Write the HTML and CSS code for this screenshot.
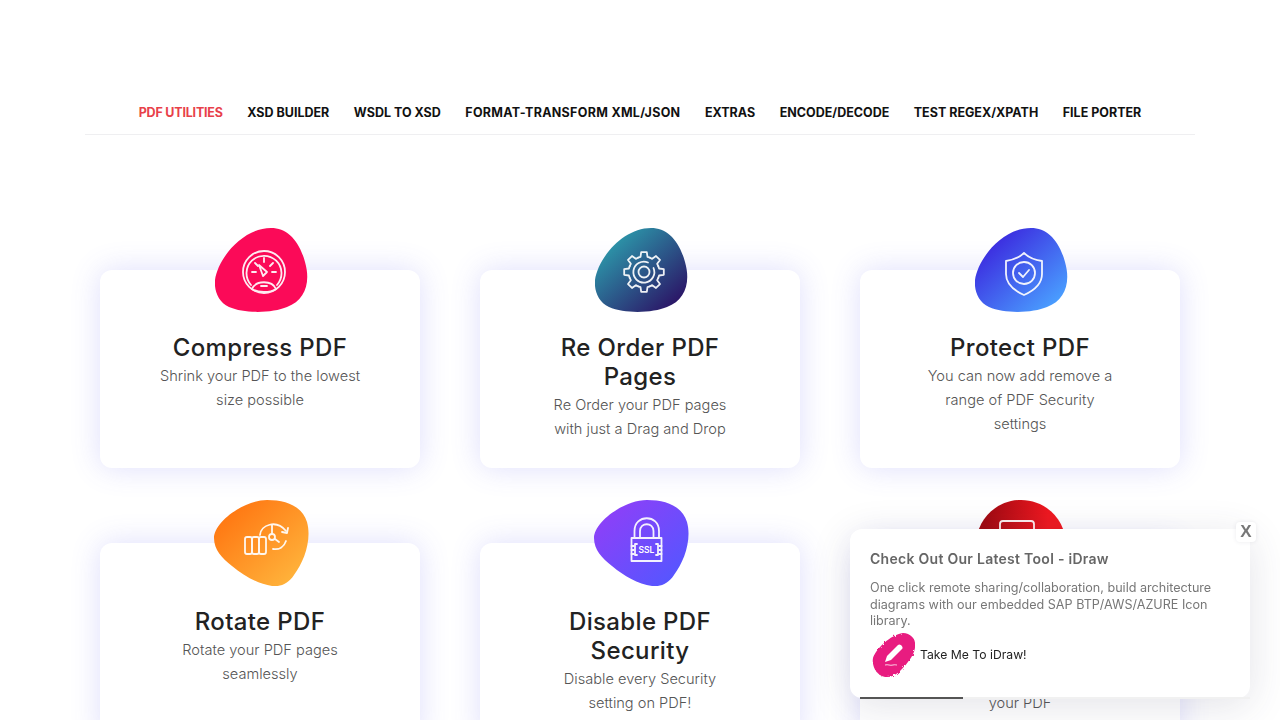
FILE: index.html
```html
<!DOCTYPE html>
<html lang="en">
<head>
  <meta charset="UTF-8" />
  <meta name="viewport" content="width=device-width, initial-scale=1.0"/>
  <title>PDF Utilities</title>
  <link rel="stylesheet" href="styles.css">
</head>
<body>

  <!-- Tabs -->
  <nav class="tabs">
    <a class="tab active" href="#">PDF UTILITIES</a>
    <a class="tab" href="#">XSD BUILDER</a>
    <a class="tab" href="#">WSDL TO XSD</a>
    <a class="tab tab-long" href="#">FORMAT-TRANSFORM XML/JSON</a>
    <a class="tab" href="#">EXTRAS</a>
    <a class="tab" href="#">ENCODE/DECODE</a>
    <a class="tab" href="#">TEST REGEX/XPATH</a>
    <a class="tab" href="#">FILE PORTER</a>
  </nav>

  <!-- Tool cards -->
  <main class="cards">

    <div class="card">
      <svg class="blob" viewBox="0 0 94 86">
        <path fill="#fb0a58" d="M56 0C72 0 84 12 90 34C96 55 90 72 72 79C58 85 30 86 14 79C3 74 -1 62 0 52C3 30 28 0 56 0Z"/>
        <g class="line">
          <circle cx="49" cy="44" r="21"/>
          <path d="M36 57A17.500 17.500 0 1 1 62 57"/>
          <path d="M49 30v4M37 44h4M57 44h4M40 35l3 3M58 35l-3 3"/>
          <path d="M44 37L52 44L48 48Z"/>
          <path d="M37 61C41 52 57 52 61 61C55 65 43 65 37 61Z"/>
          <path d="M46 58h6"/>
        </g>
      </svg>
      <h3>Compress PDF</h3>
      <p>Shrink your PDF to the lowest<br>size possible</p>
    </div>

    <div class="card">
      <svg class="blob" viewBox="0 0 94 86">
        <defs>
          <linearGradient id="teal" x1="0" y1="0" x2="1" y2="1">
            <stop offset="0.1" stop-color="#2ca3b0"/>
            <stop offset="0.9" stop-color="#2b1466"/>
          </linearGradient>
          <path id="tooth" d="M63.3 38.100L64.100 40.500L68.800 41.200L68.800 46.800L64.100 47.500L63.300 49.900"/>
        </defs>
        <path fill="url(#teal)" d="M56 0C72 0 84 12 90 34C96 55 90 72 72 79C58 85 30 86 14 79C3 74 -1 62 0 52C3 30 28 0 56 0Z"/>
        <g class="line">
          <use href="#tooth"/>
          <use href="#tooth" transform="rotate(45 49 44)"/>
          <use href="#tooth" transform="rotate(90 49 44)"/>
          <use href="#tooth" transform="rotate(135 49 44)"/>
          <use href="#tooth" transform="rotate(180 49 44)"/>
          <use href="#tooth" transform="rotate(225 49 44)"/>
          <use href="#tooth" transform="rotate(270 49 44)"/>
          <use href="#tooth" transform="rotate(315 49 44)"/>
          <path d="M53 34.500A10.500 10.500 0 1 0 58.500 40"/>
          <circle cx="49" cy="44" r="5.500"/>
        </g>
      </svg>
      <h3>Re Order PDF<br>Pages</h3>
      <p>Re Order your PDF pages<br>with just a Drag and Drop</p>
    </div>

    <div class="card">
      <svg class="blob" viewBox="0 0 94 86">
        <defs>
          <linearGradient id="blue" x1="0" y1="0" x2="1" y2="1">
            <stop offset="0.1" stop-color="#3a1fdc"/>
            <stop offset="0.9" stop-color="#4aa0ff"/>
          </linearGradient>
        </defs>
        <path fill="url(#blue)" d="M56 0C72 0 84 12 90 34C96 55 90 72 72 79C58 85 30 86 14 79C3 74 -1 62 0 52C3 30 28 0 56 0Z"/>
        <g class="line">
          <path d="M49 25C54 30 60 32 67 33V46C67 56 58 63 49 67C40 63 31 56 31 46V33C38 32 44 30 49 25Z"/>
          <circle cx="49" cy="45" r="11"/>
          <path d="M44 45L48 49L54 42"/>
        </g>
      </svg>
      <h3>Protect PDF</h3>
      <p>You can now add remove a<br>range of PDF Security<br>settings</p>
    </div>

    <div class="card">
      <svg class="blob blob-wide" viewBox="0 0 95 86">
        <defs>
          <linearGradient id="orange" x1="0" y1="0" x2="1" y2="1">
            <stop offset="0.1" stop-color="#ff7410"/>
            <stop offset="0.9" stop-color="#ffb43c"/>
          </linearGradient>
        </defs>
        <path fill="url(#orange)" d="M53 0C72 0 88 6 93 22C98 40 90 62 80 75C74 84 66 87 58 86C44 84 30 76 18 66C8 58 0 50 0 38C0 22 30 0 53 0Z"/>
        <g class="line">
          <rect x="31" y="37" width="7" height="17" rx="2"/>
          <rect x="38" y="37" width="7" height="17" rx="2"/>
          <rect x="45" y="37" width="7" height="17" rx="2"/>
          <path d="M46 35C47 25 62 19 72 31"/>
          <path d="M68 32L73 33L74 28"/>
          <circle cx="58" cy="37" r="3"/>
          <path d="M58 25V34M61 39L65 42"/>
          <path d="M72 41C70 47 65 50 59 49"/>
        </g>
      </svg>
      <h3>Rotate PDF</h3>
      <p>Rotate your PDF pages<br>seamlessly</p>
    </div>

    <div class="card">
      <svg class="blob blob-wide" viewBox="0 0 95 86">
        <defs>
          <linearGradient id="purple" x1="0" y1="0" x2="1" y2="1">
            <stop offset="0.1" stop-color="#8f3ff8"/>
            <stop offset="0.9" stop-color="#5556ff"/>
          </linearGradient>
        </defs>
        <path fill="url(#purple)" d="M53 0C72 0 88 6 93 22C98 40 90 62 80 75C74 84 66 87 58 86C44 84 30 76 18 66C8 58 0 50 0 38C0 22 30 0 53 0Z"/>
        <g class="line">
          <rect x="37.500" y="38" width="30" height="23"/>
          <path d="M40.500 38V31C40.500 14 65 14 65 31V38"/>
          <path d="M46 38V31C46 22 59.500 22 59.500 31V38"/>
          <path d="M43 44H41V55H43M62 44H64V55H62"/>
          <path d="M37.500 46H40M37.500 50H40M37.500 54H40M65 46H67.500M65 50H67.500M65 54H67.500"/>
        </g>
        <text class="ssl" x="52.500" y="52.500">SSL</text>
      </svg>
      <h3>Disable PDF<br>Security</h3>
      <p>Disable every Security<br>setting on PDF!</p>
    </div>

    <!-- title and first line sit behind the popup -->
    <div class="card">
      <svg class="blob blob-wide" viewBox="0 0 95 86">
        <defs>
          <linearGradient id="red" x1="0" y1="0" x2="1" y2="0">
            <stop offset="0.1" stop-color="#a00a12"/>
            <stop offset="0.8" stop-color="#ee1820"/>
          </linearGradient>
        </defs>
        <path fill="url(#red)" d="M47 0C72 0 92 20 92 45C92 70 72 86 47 86C22 86 2 70 2 45C2 20 22 0 47 0Z"/>
        <g class="line">
          <rect x="26" y="21" width="34" height="34" rx="3"/>
        </g>
      </svg>
      <h3 class="covered">PDF<br>Tool</h3>
      <p><span class="covered">PDF tool</span><br>your PDF</p>
    </div>

  </main>

  <!-- Promo popup -->
  <aside class="promo">
    <button class="promo-close">X</button>
    <h4>Check Out Our Latest Tool - iDraw</h4>
    <p>One click remote sharing/collaboration, build architecture diagrams with our embedded SAP BTP/AWS/AZURE Icon library.</p>
    <a class="promo-link" href="#">
      <svg class="brush" viewBox="0 0 46 48">
        <defs>
          <filter id="rough" x="-20%" y="-20%" width="140%" height="140%">
            <feTurbulence type="fractalNoise" baseFrequency="0.35" numOctaves="2" seed="4"/>
            <feDisplacementMap in="SourceGraphic" scale="3"/>
          </filter>
        </defs>
        <path class="brush-paint" filter="url(#rough)" d="M31 2C38 2 44 8 43 14C44 22 36 32 28 40C22 46 14 48 8 44C2 40 0 32 1 27C4 18 18 4 31 2Z"/>
        <path class="brush-pen" d="M13 31L15 25L26 14C28 12 32 16 30 18L19 29Z"/>
        <path class="brush-ink" d="M13 34C16 33 18 35 21 34C23 33.500 24 34 25 34"/>
      </svg>
      Take Me To iDraw!
    </a>
    <div class="promo-timer"><span></span></div>
  </aside>

</body>
</html>
```

FILE: styles.css
```css
/* Base Styles */
html, body {
  height: 720px;
  overflow: hidden;
}
body {
  font-family: Inter, "Noto Sans", sans-serif;
  margin: 0;
  background-color: #fff;
}

/* Tabs */
.tabs {
  display: flex;
  justify-content: center;
  gap: 24.5px;
  margin: 0 85px;
  padding: 101px 0 9px;
  border-bottom: 1px solid #efeff1;
}
.tab {
  font-size: 12.5px;
  font-weight: 700;
  line-height: 24px;
  color: #111;
  text-decoration: none;
}
.tab-long {
  letter-spacing: 0.3px;
}
.tab.active {
  color: #e8404a;
  letter-spacing: -0.2px;
}

/* Tool cards */
.cards {
  display: grid;
  grid-template-columns: repeat(3, 320px);
  column-gap: 60px;
  row-gap: 75px;
  padding: 135px 100px 0;
}
.card {
  background: #fff;
  border-radius: 12px;
  box-shadow: 0 0 30px rgba(90, 90, 240, 0.2);
  padding: 0 20px 27px;
  text-align: center;
}
.blob {
  display: block;
  width: 94px;
  height: 86px;
  margin: -42px 0 19px 94.5px;
}
.blob-wide {
  width: 95px;
  margin: -43px 0 20.5px 93.5px;
}
.line {
  fill: none;
  stroke: #fff;
  stroke-width: 1.8;
  stroke-linejoin: round;
  stroke-linecap: round;
  opacity: 0.92;
}
.ssl {
  fill: #fff;
  font-size: 8.5px;
  font-weight: 600;
  text-anchor: middle;
}
.card h3 {
  margin: 0;
  font-size: 24px;
  font-weight: 500;
  line-height: 29px;
  letter-spacing: 0.35px;
  color: #222;
}
.card p {
  margin: 2px 0 0;
  font-size: 14.6px;
  font-weight: 300;
  line-height: 24px;
  color: #555;
}
.covered {
  visibility: hidden;
}

/* Promo popup */
.promo {
  position: fixed;
  left: 850px;
  top: 529px;
  width: 400px;
  height: 169px;
  box-sizing: border-box;
  padding: 20px 20px 0;
  background: #fff;
  border-radius: 12px;
  box-shadow: 0 8px 40px rgba(60, 60, 90, 0.14);
}
.promo-close {
  position: absolute;
  right: -6px;
  top: -7px;
  width: 20px;
  height: 20px;
  padding: 0 0 2px;
  border: none;
  border-radius: 4px;
  background: #fff;
  box-shadow: 0 0 4px rgba(60, 60, 90, 0.1);
  color: #777;
  font-family: "Liberation Sans", sans-serif;
  font-size: 17px;
  font-weight: 700;
}
.promo h4 {
  margin: 0;
  font-size: 14px;
  font-weight: 600;
  line-height: 20px;
  letter-spacing: 0.28px;
  color: #666;
}
.promo p {
  margin: 11px 0 0;
  font-size: 12.6px;
  font-weight: 400;
  line-height: 16.5px;
  color: #777;
}
.promo-link {
  display: flex;
  align-items: center;
  gap: 2px;
  margin: 1px 0 0 2px;
  font-size: 12.2px;
  color: #222;
  text-decoration: none;
}
.brush {
  width: 46px;
  height: 48px;
}
.brush-paint {
  fill: #e81a80;
}
.brush-pen {
  fill: #fff;
}
.brush-ink {
  fill: none;
  stroke: #fff;
  stroke-width: 0.8;
}
.promo-timer {
  position: absolute;
  left: 10px;
  right: 0;
  bottom: -1px;
  height: 2px;
  background: #f1f1f1;
}
.promo-timer span {
  display: block;
  width: 103px;
  height: 2px;
  background: #555;
}
```
